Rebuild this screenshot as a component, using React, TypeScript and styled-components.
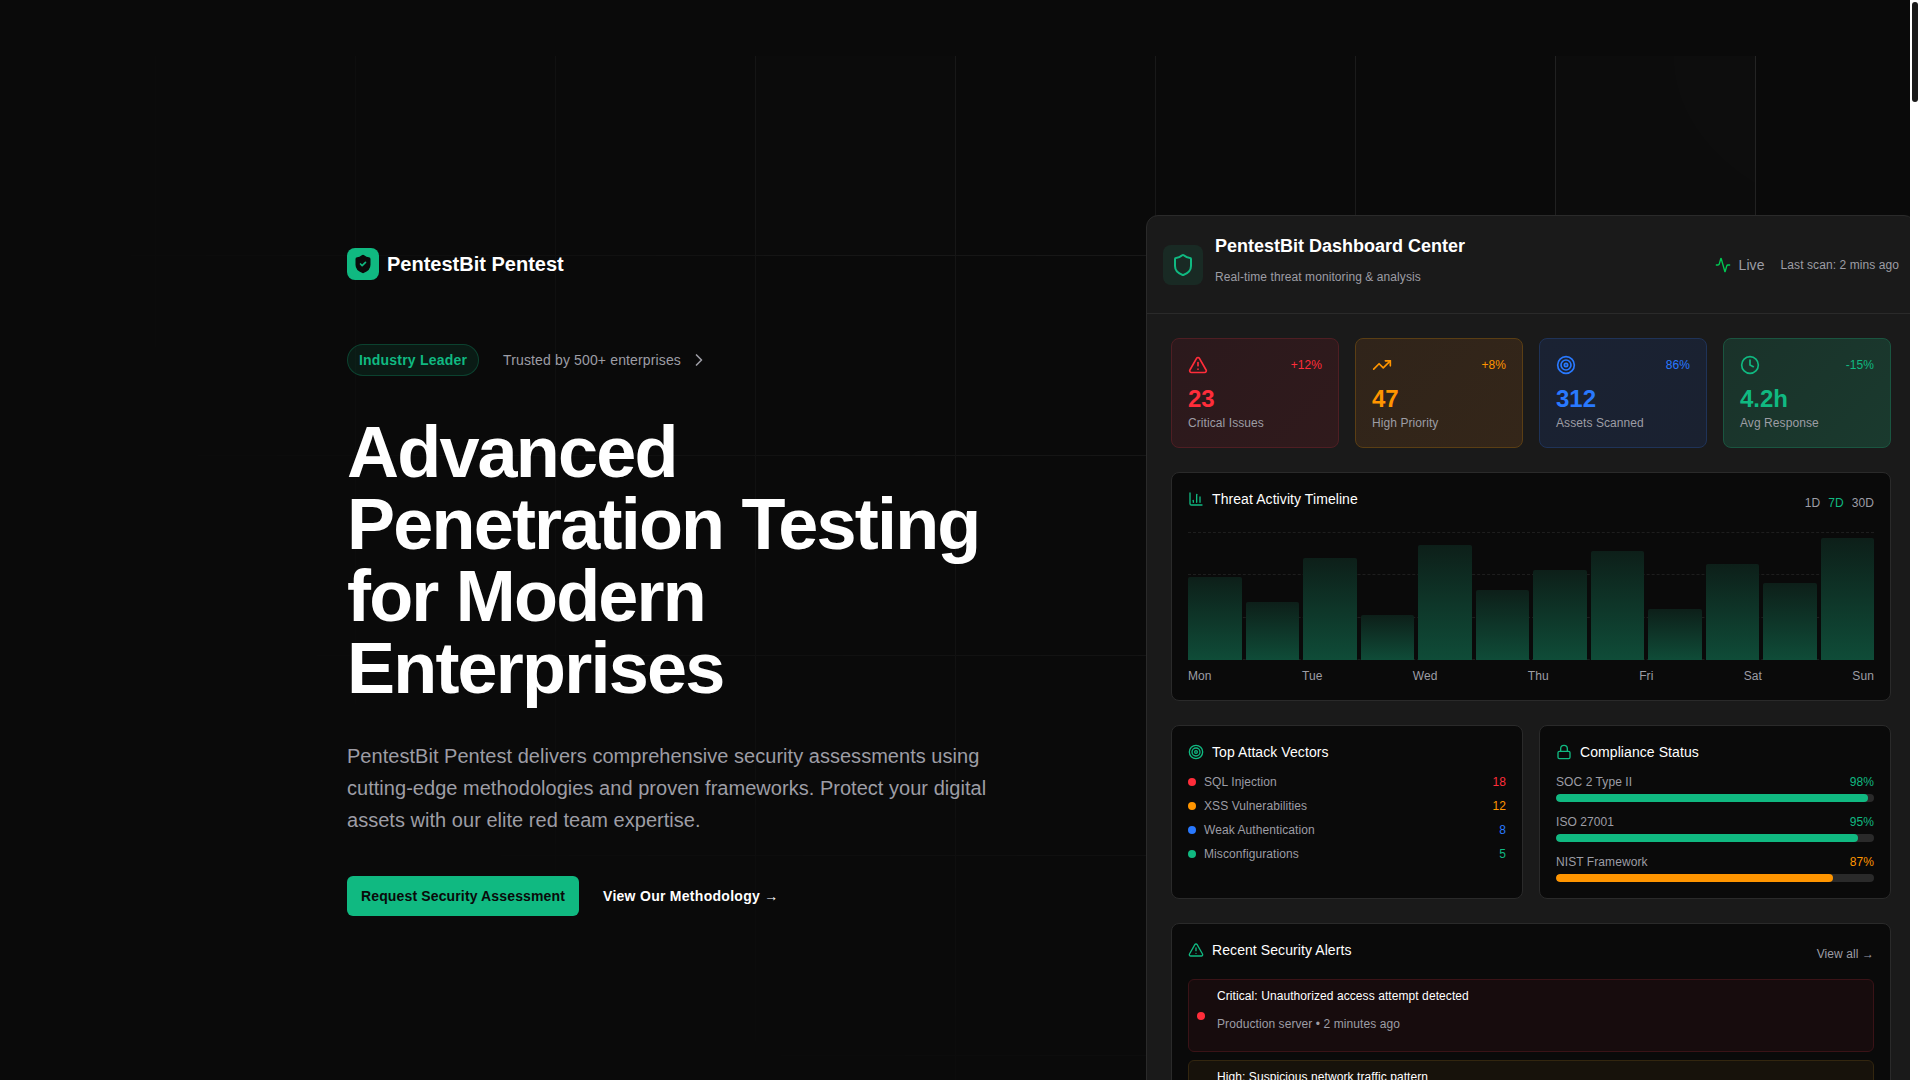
import React from 'react';
import styled, { createGlobalStyle } from 'styled-components';
import { Activity, ChartColumn, ChevronRight, Clock, Lock, Shield, Target, TrendingUp, TriangleAlert } from 'lucide-react';

const GREEN = '#10b981';
const RED = '#ff2d3a';
const ORANGE = '#ff9500';
const BLUE = '#2979ff';
const MUTED = '#9d9da5';

const Global = createGlobalStyle`
  * { box-sizing: border-box; }
  html, body { height: 100%; overflow: hidden; }
  body { margin: 0; background: #fff; color: #fff; font-family: "Liberation Sans", Arial, sans-serif; letter-spacing: 0.08px; }
  h1, h2, h3, p { margin: 0; }
`;

const Shell = styled.div`
  display: flex;
  height: 100vh;
  overflow: hidden;
  background: #fff;
`;
const ScrollRail = styled.div`
  flex: none;
  width: 10px;
  padding: 2px;
  background: #fff;
`;
const ScrollThumb = styled.div`
  height: 100px;
  border-radius: 3px;
  background: #1a1a1a;
`;
const Page = styled.div`
  flex: 1;
  min-width: 0;
  overflow: hidden;
  background: #0a0a0a;
`;
const TopBar = styled.header`
  height: 56px;
`;
const Hero = styled.section`
  position: relative;
  overflow: hidden;
`;
const Backdrop = styled.svg`
  position: absolute;
  inset: 0;
  width: 100%;
  height: 100%;
  stroke: rgba(255, 255, 255, 0.1);
  mask-image: radial-gradient(100% 100% at top right, #fff, transparent);
`;
const Squares = styled.svg`
  overflow: visible;
  fill: rgba(255, 255, 255, 0.014);
  stroke: none;
`;
const Container = styled.div`
  position: relative;
  display: flex;
  max-width: 1280px;
  margin: 0 auto;
  padding: 159px 32px 160px;
`;
const Intro = styled.div`
  flex: none;
  width: 672px;
  padding-top: 33px;
`;
const Brand = styled.div`
  display: flex;
  align-items: center;
  gap: 8px;
`;
const BrandMark = styled.div`
  display: flex;
  align-items: center;
  justify-content: center;
  width: 32px;
  height: 32px;
  border-radius: 8px;
  background: ${GREEN};
`;
const BrandName = styled.span`
  font-size: 20px;
  line-height: 28px;
  font-weight: 700;
  letter-spacing: 0;
`;
const TrustRow = styled.div`
  display: flex;
  align-items: center;
  gap: 24px;
  margin-top: 64px;
`;
const Badge = styled.span`
  display: inline-flex;
  align-items: center;
  height: 32px;
  padding: 0 11px;
  border: 1px solid rgba(16, 185, 129, 0.25);
  border-radius: 16px;
  background: rgba(16, 185, 129, 0.1);
  color: ${GREEN};
  font-size: 14px;
  font-weight: 700;
  letter-spacing: 0.2px;
`;
const Trust = styled.span`
  display: inline-flex;
  align-items: center;
  gap: 8px;
  color: ${MUTED};
  font-size: 14px;
  line-height: 24px;
  letter-spacing: 0.14px;
`;
const Headline = styled.h1`
  margin-top: 40px;
  font-size: 72px;
  line-height: 72px;
  font-weight: 700;
  letter-spacing: -1.8px;
`;
const Lead = styled.p`
  margin-top: 36px;
  color: ${MUTED};
  font-size: 20px;
  line-height: 32px;
  letter-spacing: 0.03px;
`;
const Actions = styled.div`
  display: flex;
  align-items: center;
  gap: 24px;
  margin-top: 40px;
`;
const PrimaryButton = styled.a`
  display: flex;
  align-items: center;
  height: 40px;
  padding: 0 14px;
  border-radius: 6px;
  background: ${GREEN};
  color: #0a0a0a;
  font-size: 14px;
  font-weight: 700;
  letter-spacing: 0.14px;
`;
const TextButton = styled.a`
  color: #fff;
  font-size: 14px;
  line-height: 24px;
  font-weight: 700;
  letter-spacing: 0.28px;
`;
const Panel = styled.div`
  flex: none;
  width: 770px;
  margin-left: 127px;
  border: 1px solid #2a2a2a;
  border-radius: 12px;
  background: #1a1a1a;
`;
const PanelHeader = styled.div`
  display: flex;
  align-items: center;
  justify-content: space-between;
  height: 98px;
  padding: 0 16px;
  border-bottom: 1px solid #2a2a2a;
`;
const HeaderLeft = styled.div`
  display: flex;
  align-items: center;
  gap: 12px;
`;
const HeaderMark = styled.div`
  display: flex;
  align-items: center;
  justify-content: center;
  width: 40px;
  height: 40px;
  border-radius: 8px;
  background: rgba(16, 185, 129, 0.1);
  color: ${GREEN};
`;
const HeaderTitles = styled.div`
  padding-bottom: 12px;
`;
const PanelTitle = styled.h2`
  font-size: 18px;
  line-height: 28px;
  font-weight: 700;
  letter-spacing: 0;
`;
const PanelSub = styled.p`
  margin-top: 9px;
  color: ${MUTED};
  font-size: 12px;
  line-height: 16px;
`;
const HeaderRight = styled.div`
  display: flex;
  align-items: center;
  gap: 16px;
`;
const Live = styled.span`
  display: inline-flex;
  align-items: center;
  gap: 8px;
  color: ${MUTED};
  font-size: 14px;
  line-height: 20px;
`;
const LastScan = styled.span`
  color: ${MUTED};
  font-size: 12px;
  line-height: 16px;
`;
const PanelBody = styled.div`
  display: flex;
  flex-direction: column;
  gap: 24px;
  padding: 24px;
`;
const StatGrid = styled.div`
  display: grid;
  grid-template-columns: repeat(4, 1fr);
  gap: 16px;
`;
const StatCard = styled.div<{ $bg: string; $line: string; $color: string }>`
  padding: 16px;
  border: 1px solid ${p => p.$line};
  border-radius: 8px;
  background: ${p => p.$bg};
  color: ${p => p.$color};
`;
const StatTop = styled.div`
  display: flex;
  align-items: center;
  justify-content: space-between;
  height: 20px;
  margin-bottom: 8px;
`;
const StatDelta = styled.span`
  font-size: 12px;
  line-height: 16px;
`;
const StatValue = styled.div`
  font-size: 24px;
  line-height: 32px;
  font-weight: 700;
  letter-spacing: 0;
`;
const StatLabel = styled.div`
  color: ${MUTED};
  font-size: 12px;
  line-height: 16px;
`;
const Card = styled.div`
  padding: 16px;
  border: 1px solid #2a2a2a;
  border-radius: 8px;
  background: #0a0a0a;
`;
const CardHeader = styled.div<{ $gap: number }>`
  display: flex;
  align-items: flex-start;
  justify-content: space-between;
  height: 27px;
  margin-bottom: ${p => p.$gap}px;
`;
const CardTitle = styled.h3`
  display: flex;
  align-items: center;
  gap: 8px;
  color: #fff;
  font-size: 14px;
  line-height: 20px;
  font-weight: 400;
  svg { color: ${GREEN}; }
`;
const RangeTabs = styled.div`
  display: flex;
  gap: 8px;
  margin-top: 6px;
`;
const RangeTab = styled.span<{ $active?: boolean }>`
  color: ${p => (p.$active ? GREEN : MUTED)};
  font-size: 12px;
  line-height: 16px;
`;
const ViewAll = styled.a`
  margin-top: 6px;
  color: ${MUTED};
  font-size: 12px;
  line-height: 16px;
`;
const Chart = styled.div`
  position: relative;
  height: 128px;
`;
const ChartLines = styled.div`
  position: absolute;
  inset: 0;
  display: flex;
  flex-direction: column;
  justify-content: space-between;
`;
const ChartLine = styled.div`
  border-top: 1px dashed #1e1e1e;
`;
const Bars = styled.div`
  position: relative;
  display: flex;
  align-items: flex-end;
  gap: 4px;
  height: 100%;
`;
const Bar = styled.div`
  flex: 1;
  border-radius: 2px 2px 0 0;
  background: linear-gradient(to top, #0f4c38, #0d1f19);
`;
const Days = styled.div`
  display: flex;
  justify-content: space-between;
  margin-top: 8px;
  color: ${MUTED};
  font-size: 12px;
  line-height: 16px;
`;
const TwoUp = styled.div`
  display: grid;
  grid-template-columns: 1fr 1fr;
  gap: 16px;
`;
const TitleOnly = styled.div`
  margin-bottom: 12px;
`;
const VectorList = styled.div`
  display: flex;
  flex-direction: column;
  gap: 8px;
`;
const VectorRow = styled.div`
  display: flex;
  align-items: center;
  font-size: 12px;
  line-height: 16px;
`;
const Dot = styled.span<{ $color: string }>`
  flex: none;
  width: 8px;
  height: 8px;
  border-radius: 50%;
  background: ${p => p.$color};
`;
const VectorName = styled.span`
  flex: 1;
  margin-left: 8px;
  color: ${MUTED};
`;
const Count = styled.span<{ $color: string }>`
  color: ${p => p.$color};
`;
const Meters = styled.div`
  display: flex;
  flex-direction: column;
  gap: 12px;
`;
const MeterHead = styled.div`
  display: flex;
  justify-content: space-between;
  margin-bottom: 4px;
  color: ${MUTED};
  font-size: 12px;
  line-height: 16px;
`;
const Track = styled.div`
  height: 8px;
  border-radius: 4px;
  background: #2a2a2a;
  overflow: hidden;
`;
const Fill = styled.div<{ $color: string }>`
  height: 100%;
  border-radius: 4px;
  background: ${p => p.$color};
`;
const AlertList = styled.div`
  display: flex;
  flex-direction: column;
  gap: 8px;
`;
const AlertBox = styled.div<{ $bg: string; $line: string }>`
  display: flex;
  align-items: center;
  gap: 12px;
  padding: 8px;
  border: 1px solid ${p => p.$line};
  border-radius: 6px;
  background: ${p => p.$bg};
`;
const AlertTitle = styled.p`
  color: #fff;
  font-size: 12px;
  line-height: 16px;
`;
const AlertMeta = styled.p`
  margin: 12px 0 11px;
  color: ${MUTED};
  font-size: 12px;
  line-height: 16px;
`;

const stats = [
  { Icon: TriangleAlert, delta: '+12%', value: '23', label: 'Critical Issues', color: RED, bg: 'linear-gradient(135deg,#2b191c,#301a1c)', line: '#4f1e23' },
  { Icon: TrendingUp, delta: '+8%', value: '47', label: 'High Priority', color: ORANGE, bg: 'linear-gradient(135deg,#30241a,#342619)', line: '#5a3e14' },
  { Icon: Target, delta: '86%', value: '312', label: 'Assets Scanned', color: BLUE, bg: 'linear-gradient(135deg,#1a2233,#1a2130)', line: '#1f3358' },
  { Icon: Clock, delta: '-15%', value: '4.2h', label: 'Avg Response', color: GREEN, bg: 'linear-gradient(135deg,#1a322a,#1a3a2e)', line: '#1a5540' },
];
const bars = [65, 45, 80, 35, 90, 55, 70, 85, 40, 75, 60, 95];
const days = ['Mon', 'Tue', 'Wed', 'Thu', 'Fri', 'Sat', 'Sun'];
const vectors = [
  { name: 'SQL Injection', count: 18, color: RED },
  { name: 'XSS Vulnerabilities', count: 12, color: ORANGE },
  { name: 'Weak Authentication', count: 8, color: BLUE },
  { name: 'Misconfigurations', count: 5, color: GREEN },
];
const meters = [
  { name: 'SOC 2 Type II', value: 98, color: GREEN },
  { name: 'ISO 27001', value: 95, color: GREEN },
  { name: 'NIST Framework', value: 87, color: ORANGE },
];
const alerts = [
  { title: 'Critical: Unauthorized access attempt detected', meta: 'Production server • 2 minutes ago', color: RED, bg: '#170c0d', line: '#3a1317' },
  { title: 'High: Suspicious network traffic pattern', meta: 'Network gateway • 15 minutes ago', color: ORANGE, bg: '#17120b', line: '#33260f' },
  { title: 'Medium: Outdated SSL certificate found', meta: 'Web server • 1 hour ago', color: BLUE, bg: '#0c1118', line: '#14233f' },
];

function BrandIcon() {
  return (
    <svg width="20" height="20" viewBox="0 0 24 24" fill="none" strokeWidth="2" strokeLinecap="round" strokeLinejoin="round">
      <path fill="#0a0a0a" stroke="#0a0a0a" d="M20 13c0 5-3.5 7.5-7.66 8.95a1 1 0 0 1-.67-.01C7.5 20.5 4 18 4 13V6a1 1 0 0 1 1-1c2 0 4.5-1.2 6.24-2.72a1.17 1.17 0 0 1 1.52 0C14.51 3.81 17 5 19 5a1 1 0 0 1 1 1z" />
      <path stroke={GREEN} d="m9 12 2 2 4-4" />
    </svg>
  );
}

function GridBackdrop() {
  return (
    <Backdrop aria-hidden="true">
      <defs>
        <pattern id="hero-grid" x="50%" y="-1" width="200" height="200" patternUnits="userSpaceOnUse">
          <path d="M.5 200V.5H200" fill="none" />
        </pattern>
      </defs>
      <Squares x="50%" y="-1">
        <path d="M-200 0h201v201h-201Z M600 0h201v201h-201Z M-400 600h201v201h-201Z M200 800h201v201h-201Z" />
      </Squares>
      <rect width="100%" height="100%" strokeWidth="0" fill="url(#hero-grid)" />
    </Backdrop>
  );
}

export default function App() {
  return (
    <Shell>
      <Global />
      <Page>
        <TopBar />
        <Hero>
          <GridBackdrop />
          <Container>
            <Intro>
              <Brand>
                <BrandMark><BrandIcon /></BrandMark>
                <BrandName>PentestBit Pentest</BrandName>
              </Brand>
              <TrustRow>
                <Badge>Industry Leader</Badge>
                <Trust>Trusted by 500+ enterprises <ChevronRight size={20} /></Trust>
              </TrustRow>
              <Headline>Advanced Penetration Testing for Modern Enterprises</Headline>
              <Lead>PentestBit Pentest delivers comprehensive security assessments using cutting-edge methodologies and proven frameworks. Protect your digital assets with our elite red team expertise.</Lead>
              <Actions>
                <PrimaryButton>Request Security Assessment</PrimaryButton>
                <TextButton>View Our Methodology →</TextButton>
              </Actions>
            </Intro>
            <Panel>
              <PanelHeader>
                <HeaderLeft>
                  <HeaderMark><Shield size={24} /></HeaderMark>
                  <HeaderTitles>
                    <PanelTitle>PentestBit Dashboard Center</PanelTitle>
                    <PanelSub>Real-time threat monitoring &amp; analysis</PanelSub>
                  </HeaderTitles>
                </HeaderLeft>
                <HeaderRight>
                  <Live><Activity size={16} color="#00c853" /> Live</Live>
                  <LastScan>Last scan: 2 mins ago</LastScan>
                </HeaderRight>
              </PanelHeader>
              <PanelBody>
                <StatGrid>
                  {stats.map(({ Icon, delta, value, label, color, bg, line }) => (
                    <StatCard key={label} $bg={bg} $line={line} $color={color}>
                      <StatTop>
                        <Icon size={20} />
                        <StatDelta>{delta}</StatDelta>
                      </StatTop>
                      <StatValue>{value}</StatValue>
                      <StatLabel>{label}</StatLabel>
                    </StatCard>
                  ))}
                </StatGrid>
                <Card>
                  <CardHeader $gap={16}>
                    <CardTitle><ChartColumn size={16} /> Threat Activity Timeline</CardTitle>
                    <RangeTabs>
                      <RangeTab>1D</RangeTab>
                      <RangeTab $active>7D</RangeTab>
                      <RangeTab>30D</RangeTab>
                    </RangeTabs>
                  </CardHeader>
                  <Chart>
                    <ChartLines>
                      <ChartLine /><ChartLine /><ChartLine /><ChartLine />
                    </ChartLines>
                    <Bars>
                      {bars.map((h, i) => <Bar key={i} style={{ height: `${h}%` }} />)}
                    </Bars>
                  </Chart>
                  <Days>{days.map(d => <span key={d}>{d}</span>)}</Days>
                </Card>
                <TwoUp>
                  <Card>
                    <TitleOnly><CardTitle><Target size={16} /> Top Attack Vectors</CardTitle></TitleOnly>
                    <VectorList>
                      {vectors.map(v => (
                        <VectorRow key={v.name}>
                          <Dot $color={v.color} />
                          <VectorName>{v.name}</VectorName>
                          <Count $color={v.color}>{v.count}</Count>
                        </VectorRow>
                      ))}
                    </VectorList>
                  </Card>
                  <Card>
                    <TitleOnly><CardTitle><Lock size={16} /> Compliance Status</CardTitle></TitleOnly>
                    <Meters>
                      {meters.map(m => (
                        <div key={m.name}>
                          <MeterHead>
                            <span>{m.name}</span>
                            <Count $color={m.color}>{m.value}%</Count>
                          </MeterHead>
                          <Track><Fill $color={m.color} style={{ width: `${m.value}%` }} /></Track>
                        </div>
                      ))}
                    </Meters>
                  </Card>
                </TwoUp>
                <Card>
                  <CardHeader $gap={12}>
                    <CardTitle><TriangleAlert size={16} /> Recent Security Alerts</CardTitle>
                    <ViewAll>View all →</ViewAll>
                  </CardHeader>
                  <AlertList>
                    {alerts.map(a => (
                      <AlertBox key={a.title} $bg={a.bg} $line={a.line}>
                        <Dot $color={a.color} />
                        <div>
                          <AlertTitle>{a.title}</AlertTitle>
                          <AlertMeta>{a.meta}</AlertMeta>
                        </div>
                      </AlertBox>
                    ))}
                  </AlertList>
                </Card>
              </PanelBody>
            </Panel>
          </Container>
        </Hero>
      </Page>
      <ScrollRail><ScrollThumb /></ScrollRail>
    </Shell>
  );
}
